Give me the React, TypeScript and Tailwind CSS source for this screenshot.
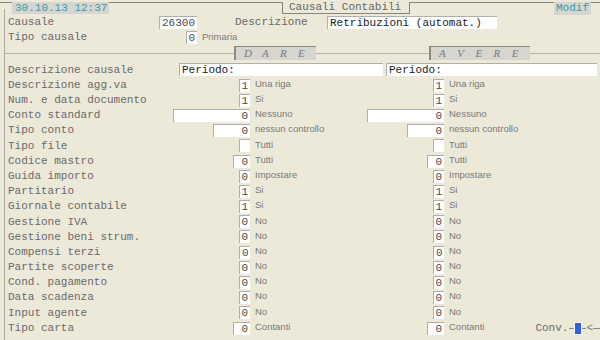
import React from 'react';

type Cell = { w: string; v: string; d: string; left?: boolean };
type Row = { label: string; dare: Cell; avere: Cell; conv?: boolean };

const mono = "font-['Liberation_Mono','Courier_New',monospace]";
const sans = "font-['Liberation_Sans',Arial,sans-serif]";

const no: Cell = { w: 'w-[11px]', v: '0', d: 'No' };
const si: Cell = { w: 'w-[11px]', v: '1', d: 'Si' };

const rows: Row[] = [
  { label: 'Descrizione agg.va', dare: { w: 'w-[11px]', v: '1', d: 'Una riga' }, avere: { w: 'w-[11px]', v: '1', d: 'Una riga' } },
  { label: 'Num. e data documento', dare: si, avere: si },
  { label: 'Conto standard', dare: { w: 'w-[77px]', v: '0', d: 'Nessuno' }, avere: { w: 'w-[77px]', v: '0', d: 'Nessuno' } },
  { label: 'Tipo conto', dare: { w: 'w-[37px]', v: '0', d: 'nessun controllo' }, avere: { w: 'w-[37px]', v: '0', d: 'nessun controllo' } },
  { label: 'Tipo file', dare: { w: 'w-[11px]', v: '', d: 'Tutti' }, avere: { w: 'w-[11px]', v: '', d: 'Tutti' } },
  { label: 'Codice mastro', dare: { w: 'w-[17px]', v: '0', d: 'Tutti' }, avere: { w: 'w-[17px]', v: '0', d: 'Tutti' } },
  { label: 'Guida importo', dare: { w: 'w-[11px]', v: '0', d: 'Impostare' }, avere: { w: 'w-[11px]', v: '0', d: 'Impostare' } },
  { label: 'Partitario', dare: si, avere: si },
  { label: 'Giornale contabile', dare: si, avere: si },
  { label: 'Gestione IVA', dare: no, avere: no },
  { label: 'Gestione beni strum.', dare: no, avere: no },
  { label: 'Compensi terzi', dare: { ...no, left: true }, avere: { ...no, left: true } },
  { label: 'Partite scoperte', dare: no, avere: no },
  { label: 'Cond. pagamento', dare: no, avere: no },
  { label: 'Data scadenza', dare: no, avere: no },
  { label: 'Input agente', dare: no, avere: no },
  { label: 'Tipo carta', dare: { w: 'w-[17px]', v: '0', d: 'Contanti' }, avere: { w: 'w-[17px]', v: '0', d: 'Contanti' }, conv: true },
];

function Field({ w, v, left, className = '' }: { w: string; v: string; left?: boolean; className?: string }) {
  return (
    <div
      className={`${w} h-[13px] bg-white border-t border-l border-[#b0afa8] text-[11px] leading-[12px] text-[#4a4a4a] ${mono} ${left ? 'text-left pl-[2px]' : 'text-right pr-[2px]'} whitespace-pre overflow-hidden ${className}`}
    >
      {v}
    </div>
  );
}

function Desc({ children }: { children: React.ReactNode }) {
  return <span className={`${sans} text-[9.5px] leading-[10px] text-[#7a7a7a] whitespace-nowrap`}>{children}</span>;
}

function Header({ letters, w }: { letters: string[]; w: string }) {
  return (
    <div className={`${w} h-[14px] bg-[#d6d5d0] border-l-2 border-t border-[#8a8a84] flex items-center pl-[8px] shrink-0`}>
      {letters.map((l, i) => (
        <span key={i} className="w-[20px] font-['Liberation_Serif',serif] italic text-[11px] text-[#7a7a7a]">{l}</span>
      ))}
    </div>
  );
}

export default function App() {
  return (
    <div className={`w-[600px] h-[340px] bg-[#ece9d8] overflow-hidden pt-[2px] ${mono}`}>
      {/* Top bar */}
      <div className="relative z-10 flex items-start h-[13px] border-t border-[#85847e]">
        <div className="ml-[12px] -mt-px w-[97px] h-[12px] bg-[#d5d5d3] pl-[3px] text-[11px] leading-[12px] text-[#3c9d9d]">30.10.13 12:37</div>
        <div className="ml-[173px] -mt-px w-[128px] h-[12px] bg-[#ece9d8] border-l border-r border-b border-[#85847e] pl-[6px] text-[11px] leading-[11px] text-[#666]">Causali Contabili</div>
        <div className="ml-[144px] -mt-px w-[37px] h-[13px] bg-[#d5d5d3] pl-[2px] text-[11px] leading-[12px] text-[#3c9d9d]">Modif</div>
      </div>

      {/* Frame */}
      <div className="-mt-[6px] ml-[4px] pt-[6px] h-[331px] border-l border-[#a9a8a2] pl-[3px] text-[11px] text-[#6a6a6a]">
        {/* Causale */}
        <div className="flex items-center h-[15px]">
          <span className="w-[151px]">Causale</span>
          <Field w="w-[38px]" v="26300" />
          <span className="ml-[38px] w-[92px]">Descrizione</span>
          <Field w="w-[170px]" v="Retribuzioni (automat.)" left className="!text-[#222]" />
        </div>
        {/* Tipo causale */}
        <div className="flex items-center h-[15px]">
          <span className="w-[178px]">Tipo causale</span>
          <Field w="w-[11px]" v="0" />
          <span className="pl-[5px]"><Desc>Primaria</Desc></span>
        </div>

        {/* DARE / AVERE separator */}
        <div className="flex items-center h-[16px] -ml-[3px]">
          <div className="w-[229px] h-px bg-[#b3b2ab]" />
          <Header letters={['D', 'A', 'R', 'E']} w="w-[82px]" />
          <div className="w-[113px] h-px bg-[#b3b2ab]" />
          <Header letters={['A', 'V', 'E', 'R', 'E']} w="w-[101px]" />
          <div className="flex-1 h-px bg-[#b3b2ab]" />
        </div>

        {/* Descrizione causale */}
        <div className="flex items-center h-[16.5px] pt-px">
          <span className="w-[171px]">Descrizione causale</span>
          <Field w="w-[204px]" v="Periodo:" left className="!text-[#222]" />
          <Field w="w-[211px]" v="Periodo:" left className="ml-[3px] !text-[#222]" />
        </div>

        {rows.map((r) => (
          <div key={r.label} className="flex items-center h-[15.2px]">
            <span className="w-[165px] whitespace-pre">{r.label}</span>
            <div className="w-[77px] flex justify-end">
              <Field w={r.dare.w} v={r.dare.v} left={r.dare.left} />
            </div>
            <div className="w-[117px] pl-[5px] -mt-[2px]">
              <Desc>{r.dare.d}</Desc>
            </div>
            <div className="w-[77px] flex justify-end">
              <Field w={r.avere.w} v={r.avere.v} left={r.avere.left} />
            </div>
            <div className="flex-1 pl-[5px] -mt-[2px]">
              <Desc>{r.avere.d}</Desc>
            </div>
            {r.conv && (
              <div className="flex items-center">
                <span className="text-[#6a6a6a]">Conv.</span>
                <div className="ml-[1px] w-[5px] h-px bg-[#8a8a84]" />
                <div className="w-[8px] h-[13px] bg-[#2f63d3] border border-[#f4f4f4]" />
                <div className="w-[4px] h-px bg-[#8a8a84]" />
                <span className="text-[#7a7a7a] leading-none">&lt;</span>
                <div className="w-[7px] h-px bg-[#8a8a84]" />
              </div>
            )}
          </div>
        ))}
      </div>
    </div>
  );
}
